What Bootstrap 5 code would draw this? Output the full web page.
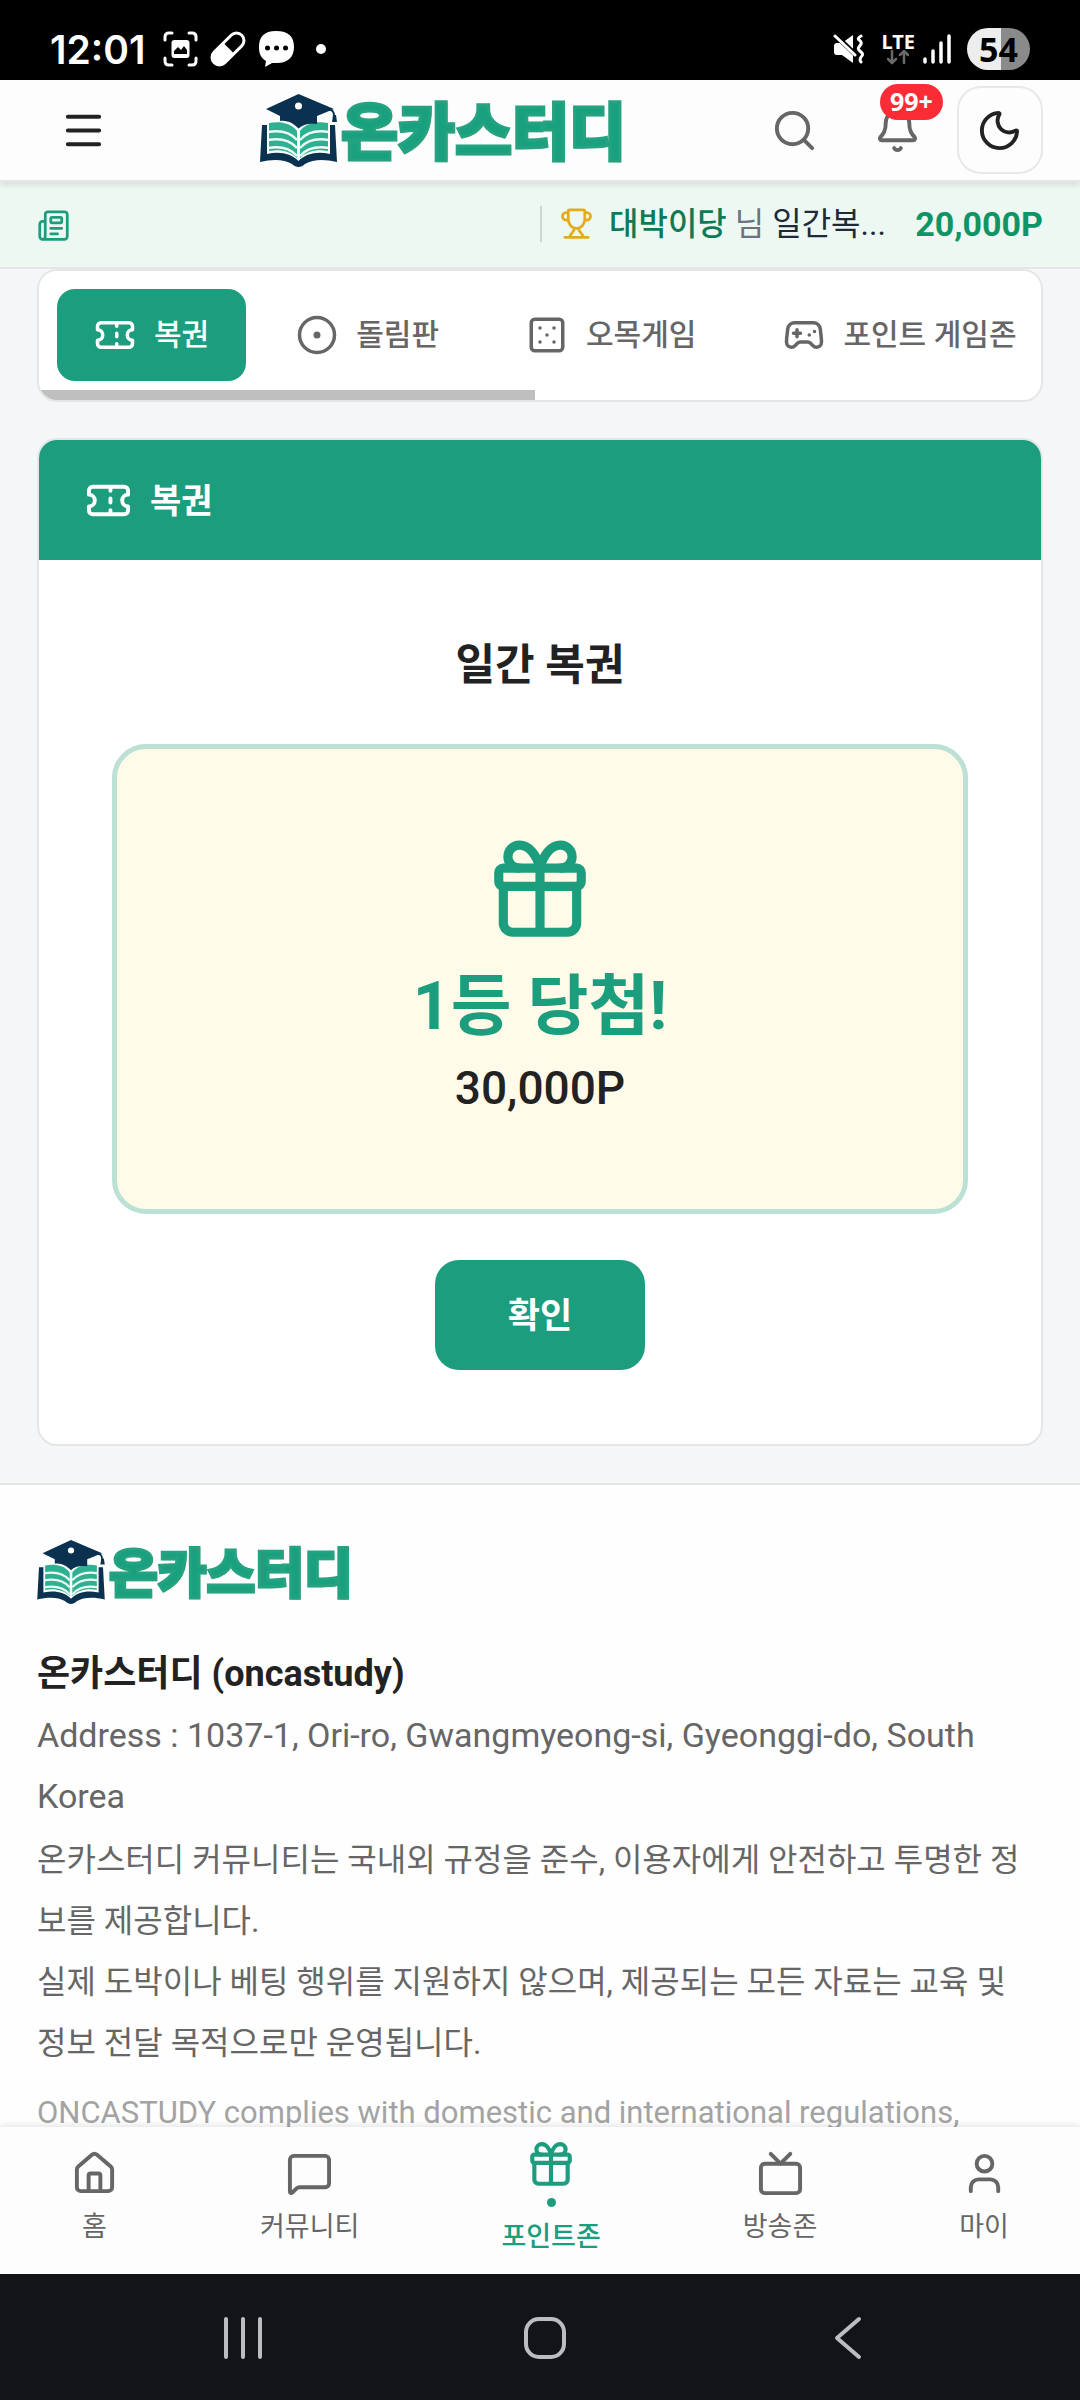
<!DOCTYPE html>
<html lang="ko">
<head>
<meta charset="utf-8">
<meta name="viewport" content="width=device-width, initial-scale=1">
<title>온카스터디 - 복권</title>
<link href="https://cdn.jsdelivr.net/npm/bootstrap@5.3.0/dist/css/bootstrap.min.css" rel="stylesheet">
<style>
  :root { --brand: #1c9e7e; --ink: #222; --soft: #666; --line: #e5e7e7; --gutter: 37px; }
  body { font-family: Roboto, "Noto Sans CJK KR", sans-serif; color: var(--ink); background: #f4f6f8; line-height: 1.2; }
  button { font-family: inherit; }
  .ico { width: 47px; height: 47px; flex: none; fill: none; stroke: currentColor; stroke-width: 2; stroke-linecap: round; stroke-linejoin: round; }
  .ico-tab { width: 42px; height: 42px; }
  .ico-tick { width: 33px; height: 33px; }
  .ico-point { width: 50px; height: 50px; }
  .ico-prize { width: 110px; height: 110px; color: var(--brand); }

  .phone-status { height: 80px; padding: 18px 50px 0; background: #000; color: #fff; }
  .phone-status .left { gap: 18px; }
  .clock { font: 600 39px/1 Inter, sans-serif; }
  .lte { font: 700 20px/16px "Noto Sans", sans-serif; }
  .battery { width: 63px; height: 42px; border-radius: 21px; background: linear-gradient(90deg, #ededed 54%, #8a8a8a 54%); color: #000; font: 700 34px/42px "Noto Sans", sans-serif; }

  .site-header { height: 102px; padding: 0 var(--gutter); background: #fdfdfd; border-bottom: 2px solid var(--line); box-shadow: 0 3px 6px rgba(0,0,0,.1); z-index: 2; }
  .tools { gap: 15px; }
  .tool-btn { width: 88px; height: 88px; padding: 0; border: 0; background: none; color: var(--soft); }
  .tool-btn.menu { width: 98px; padding-right: 6px; color: var(--ink); }
  .tool-btn.theme { width: 86px; border: 2px solid #e7e8e8; border-radius: 24px; color: var(--ink); }
  .count { top: -2px; left: 26px; height: 36px; border-radius: 18px; padding: 0 10px; background: #fb2c36; color: #fff; font: 700 25px/34px "Noto Sans", sans-serif; }
  .brand { color: #19a07e; font-family: "Noto Sans CJK KR", sans-serif; font-weight: 900; font-size: 62px; line-height: 73px; text-decoration: none; }
  .brand span { padding-bottom: 4px; -webkit-text-stroke: 3px #25a280; text-shadow: 1px 1px 1px #2b6f58; }
  .brand svg { width: 77px; height: 73px; }
  .brand-sm { font-size: 53px; line-height: 60px; }
  .brand-sm svg { width: 68px; height: 64px; }

  .ticker { height: 87px; padding: 0 var(--gutter) 2px; background: #edf8f3; border-bottom: 2px solid #e4e7e6; font-size: 32px; }
  .ticker .winner { border-left: 2px solid #cbd6d3; padding-left: 18px; height: 36px; line-height: 36px; }
  .ticker .news { color: var(--brand); }
  .ticker .cup { color: #e3ac1c; }
  .ticker .who { color: #0f7a55; font-weight: 500; }
  .ticker .nim { color: #6b7280; }
  .ticker .what { color: #1f2937; }
  .ticker .sum { color: #0f9565; font-size: 34px; }

  .page { min-height: 0; }
  .page-inner { padding: 0 var(--gutter); }
  .tabs { border: 2px solid var(--line); border-radius: 20px; background: #fff; padding: 18px 18px 19px; gap: 13px; }
  .tab-link { height: 92px; padding: 0 37px; gap: 18px; border-radius: 18px; color: var(--soft); font-size: 30px; font-weight: 500; text-decoration: none; white-space: nowrap; flex: none; }
  .tab-link.on { background: var(--brand); color: #fff; }
  .tab-scroll { left: 0; bottom: 0; width: 496px; height: 10px; background: #bfbfbf; }

  .panel { margin-top: 36px; border: 2px solid var(--line); border-radius: 20px; background: #fff; }
  .panel-head { height: 120px; padding: 0 46px; gap: 18px; background: var(--brand); color: #fff; }
  .panel-head h1 { margin: 3px 0 0; font-size: 34px; font-weight: 700; }
  .panel-body { padding: 75px 73px 74px; }
  .panel-body h2 { font-size: 43px; line-height: 60px; font-weight: 700; }
  .prize { margin-top: 49px; height: 470px; border: 5px solid #bbe1d5; border-radius: 34px; background: #fffbe8; padding-top: 87px; }
  .rank { font-size: 66px; line-height: 90px; font-weight: 700; color: var(--brand); margin-top: 16px; }
  .points { font-size: 46px; line-height: 60px; font-weight: 500; margin-top: 6px; }
  .ok-btn { margin-top: 46px; padding-top: 4px; width: 210px; height: 110px; border: 0; border-radius: 24px; background: var(--brand); color: #fff; font-size: 35px; font-weight: 700; }

  .site-footer { margin-top: 37px; padding: 55px var(--gutter) 0; border-top: 2px solid var(--line); background: #fefefe; font-size: 32px; line-height: 61px; color: var(--soft); }
  .site-footer h3 { margin: 40px 0 0; font-size: 36px; line-height: 61px; font-weight: 700; color: var(--ink); }
  .site-footer .addr { font-size: 34px; margin-bottom: 3px; }
  .site-footer .note { margin-top: 8px; font-size: 31px; color: #a3a3a3; }

  .bottom-nav { height: 147px; background: #fdfdfd; box-shadow: 0 -2px 6px rgba(0,0,0,.1); z-index: 2; }
  .bottom-nav a { color: var(--soft); font-size: 27px; line-height: 34px; text-decoration: none; padding-top: 23px; gap: 13px; }
  .bottom-nav a.on { color: var(--brand); font-weight: 500; padding-top: 13px; gap: 0; }
  .dot { width: 9px; height: 9px; border-radius: 50%; background: var(--brand); margin: 8px 0 13px; }

  .phone-keys { height: 126px; padding: 2px 81px 0 92px; background: #121418; }
  .phone-keys button { border: 0; background: none; color: #bbbdc0; padding: 0; }
  .phone-keys svg { width: 44px; height: 44px; fill: none; stroke: currentColor; stroke-width: 4; stroke-linecap: round; stroke-linejoin: round; }
</style>
<script src="https://cdn.jsdelivr.net/npm/bootstrap@5.3.0/dist/js/bootstrap.bundle.min.js"></script>
</head>
<body class="vh-100 d-flex flex-column overflow-hidden">

<svg class="d-none" aria-hidden="true">
  <symbol id="ticket" viewBox="0 0 24 24"><path d="M2 9a3 3 0 0 1 0 6v2a2 2 0 0 0 2 2h16a2 2 0 0 0 2-2v-2a3 3 0 0 1 0-6V7a2 2 0 0 0-2-2H4a2 2 0 0 0-2 2ZM13 5v2M13 17v2M13 11v2"/></symbol>
  <symbol id="gift" viewBox="0 0 24 24"><path d="M12 7v14M20 11v8a2 2 0 0 1-2 2H6a2 2 0 0 1-2-2v-8M7.5 7a1 1 0 0 1 0-5A4.8 8 0 0 1 12 7a4.8 8 0 0 1 4.5-5 1 1 0 0 1 0 5"/><rect x="3" y="7" width="18" height="4" rx="1"/></symbol>
  <symbol id="book" viewBox="0 0 77 73">
    <path d="M2 31h5v29c12-3 24-1 31.500 7C46 59 58 57 70 60V31h5l2 37c-12-3-24-3-32 2-4 4-9 4-13 0C24 65 12 65 0 68z" fill="#0b3150"/>
    <path d="M9 29c11-2 22 0 28 8v27C30 57 20 55 9 57zM68 29c-11-2-22 0-28 8v27c7-7 17-9 28-7z" fill="#2fb191"/>
    <path d="M8 38c12-2 22 0 29 8M8 46c12-2 22 0 29 8M8 54c12-2 22 0 29 8M69 38c-12-2-22 0-29 8M69 46c-12-2-22 0-29 8M69 54c-12-2-22 0-29 8" fill="none" stroke="#effaf6" stroke-width="2.500"/>
    <path d="M38.500 0 74 15 57 22v8c-8-1-14 0-18.500 4.500C34 30 28 26 20 27v-5L6 15z" fill="#0b3150"/>
    <path d="M66 16c7-1 8 2 8 6" fill="none" stroke="#0b3150" stroke-width="2"/><path d="M73 21h3l1 7h-5z" fill="#0b3150"/>
    <circle cx="38.500" cy="12" r="3.500" fill="#fff"/>
  </symbol>
</svg>

<div class="phone-status d-flex justify-content-between align-items-center flex-shrink-0">
  <div class="left d-flex align-items-center">
    <span class="clock">12:01</span>
    <svg width="163" height="36" viewBox="0 0 163 36" aria-hidden="true">
      <g fill="none" stroke="#fff" stroke-width="3" stroke-linecap="round"><path d="M2 9V6q0-4 4-4h3M26 2h3q4 0 4 4v3M33 27v3q0 4-4 4h-3M9 34H6q-4 0-4-4v-3"/></g>
      <rect x="8.500" y="9" width="18" height="18" rx="3" fill="#fff"/><path d="M11 23v-3l4-4 3 3 3-4 3 4v4z" fill="#000"/>
      <g transform="rotate(-45 65 18)"><rect x="44" y="9" width="42" height="18" rx="9" fill="#fff"/><path d="M66 12h11a6 6 0 0 1 0 12H66z" fill="#000"/></g>
      <path d="M113 0c13 0 18 6 18 16s-6 16-17 16h-5l-7 4 1-6c-5-3-7-7-7-14 0-10 5-16 17-16z" fill="#fff"/>
      <circle cx="104.500" cy="17" r="2.500"/><circle cx="113.500" cy="17" r="2.500"/><circle cx="122.500" cy="17" r="2.500"/>
      <circle cx="158" cy="18" r="5" fill="#fff"/>
    </svg>
  </div>
  <div class="d-flex align-items-center">
    <svg width="32" height="30" viewBox="0 0 32 30" aria-hidden="true">
      <path d="M1 12q0-3 3-3h5L20 1v28L9 21H4q-3 0-3-3z" fill="#fff"/><path d="M0 -1 23 21" stroke="#000" stroke-width="5"/><path d="M2 2 22 21" stroke="#fff" stroke-width="3" stroke-linecap="round"/>
      <path d="M28 2c-7 4 2 4 0 8s-5 4 0 8-4 5 0 10" fill="none" stroke="#fff" stroke-width="3" stroke-linecap="round"/>
    </svg>
    <div class="d-flex flex-column align-items-center ms-3">
      <span class="lte">LTE</span>
      <svg width="22" height="15" viewBox="0 0 22 15" fill="none" stroke="#6a6a6a" stroke-width="2.500" stroke-linecap="round" aria-hidden="true"><path d="M5 1v12M1 9l4 4 4-4M17 13V1M13 5l4-4 4 4"/></svg>
    </div>
    <svg class="ms-2 me-3" width="28" height="30" viewBox="0 0 28 30" stroke="#fff" stroke-width="3.500" stroke-linecap="round" aria-hidden="true"><path d="M2 25v3M10 17v11M18 9v19M26 2v26"/></svg>
    <span class="battery text-center">54</span>
  </div>
</div>

<header class="site-header d-flex align-items-center justify-content-between position-relative flex-shrink-0">
  <button class="tool-btn menu" type="button" aria-label="메뉴"><svg class="ico" viewBox="0 0 24 24"><path d="M4 5h16M4 12h16M4 19h16"/></svg></button>
  <a class="brand d-flex align-items-center gap-1" href="#"><svg aria-hidden="true"><use href="#book"/></svg><span>온카스터디</span></a>
  <div class="tools d-flex align-items-center">
    <button class="tool-btn" type="button" aria-label="검색"><svg class="ico" viewBox="0 0 24 24"><path d="m21 21-4.340-4.340"/><circle cx="11" cy="11" r="8"/></svg></button>
    <button class="tool-btn position-relative" type="button" aria-label="알림"><svg class="ico" viewBox="0 0 24 24"><path d="M10.268 21a2 2 0 0 0 3.464 0M3.262 15.326A1 1 0 0 0 4 17h16a1 1 0 0 0 .74-1.673C19.410 13.956 18 12.499 18 8A6 6 0 0 0 6 8c0 4.499-1.411 5.956-2.738 7.326"/></svg><span class="count position-absolute">99+</span></button>
    <button class="tool-btn theme" type="button" aria-label="다크 모드"><svg class="ico" viewBox="0 0 24 24"><path d="M20.985 12.486a9 9 0 1 1-9.473-9.472c.405-.022.617.46.402.803a6 6 0 0 0 8.268 8.268c.344-.215.825-.004.803.401"/></svg></button>
  </div>
</header>

<div class="ticker d-flex align-items-center flex-shrink-0">
  <div class="news w-50"><svg class="ico ico-tick" viewBox="0 0 24 24"><path d="M15 18h-5M18 14h-8M4 22h16a2 2 0 0 0 2-2V4a2 2 0 0 0-2-2H8a2 2 0 0 0-2 2v16a2 2 0 0 1-4 0v-9a2 2 0 0 1 2-2h2"/><rect x="10" y="6" width="8" height="4" rx="1"/></svg></div>
  <div class="winner w-50 d-flex align-items-center">
    <svg class="ico ico-tick cup" viewBox="0 0 24 24"><path d="M10.500 15.500c0 2.500-3 3.500-3.500 6.500M13.500 15.500c0 2.500 3 3.500 3.500 6.500M18 9.500h1.500a2 2 0 0 0 0-5.500H18M3.500 22h17M6 9a6 6.500 0 0 0 12 0V3a1 1 0 0 0-1-1H7a1 1 0 0 0-1 1zM6 9.500H4.500a2 2 0 0 1 0-5.500H6"/></svg>
    <span class="who ms-3">대박이당</span>
    <span class="nim ms-2">님</span>
    <span class="what ms-2">일간복...</span>
    <strong class="sum ms-auto">20,000P</strong>
  </div>
</div>

<main class="page flex-fill overflow-hidden">
  <div class="page-inner">
    <nav class="tabs d-flex overflow-hidden position-relative">
      <a class="tab-link on d-flex align-items-center" href="#"><svg class="ico ico-tab"><use href="#ticket"/></svg>복권</a>
      <a class="tab-link d-flex align-items-center" href="#"><svg class="ico ico-tab" viewBox="0 0 24 24"><circle cx="12" cy="12" r="10"/><circle cx="12" cy="12" r="1"/></svg>돌림판</a>
      <a class="tab-link d-flex align-items-center" href="#"><svg class="ico ico-tab" viewBox="0 0 24 24"><rect x="3" y="3" width="18" height="18" rx="2"/><path d="M16 8h.01M8 8h.01M8 16h.01M16 16h.01M12 12h.01"/></svg>오목게임</a>
      <a class="tab-link d-flex align-items-center" href="#"><svg class="ico ico-tab" viewBox="0 0 24 24"><path d="M6 11h4M8 9v4M15 12h.01M18 10h.01M17.320 5H6.680a4 4 0 0 0-3.978 3.590c-.006.052-.01.101-.017.152C2.604 9.416 2 14.456 2 16a3 3 0 0 0 3 3c1 0 1.500-.5 2-1l1.414-1.414A2 2 0 0 1 9.828 16h4.344a2 2 0 0 1 1.414.586L17 18c.5.5 1 1 2 1a3 3 0 0 0 3-3c0-1.545-.604-6.584-.685-7.258-.007-.05-.011-.1-.017-.151A4 4 0 0 0 17.320 5z"/></svg>포인트 게임존</a>
      <div class="tab-scroll position-absolute"></div>
    </nav>

    <section class="panel overflow-hidden">
      <div class="panel-head d-flex align-items-center"><svg class="ico"><use href="#ticket"/></svg><h1>복권</h1></div>
      <div class="panel-body text-center">
        <h2 class="mb-0">일간 복권</h2>
        <div class="prize d-flex flex-column align-items-center">
          <svg class="ico ico-prize"><use href="#gift"/></svg>
          <div class="rank">1등 당첨!</div>
          <div class="points">30,000P</div>
        </div>
        <button class="ok-btn" type="button">확인</button>
      </div>
    </section>
  </div>

  <footer class="site-footer">
    <a class="brand brand-sm d-flex align-items-center gap-1" href="#"><svg aria-hidden="true"><use href="#book"/></svg><span>온카스터디</span></a>
    <h3>온카스터디 (oncastudy)</h3>
    <p class="addr mt-0">Address : 1037-1, Ori-ro, Gwangmyeong-si, Gyeonggi-do, South Korea</p>
    <p class="m-0">온카스터디 커뮤니티는 국내외 규정을 준수, 이용자에게 안전하고 투명한 정보를 제공합니다.</p>
    <p class="m-0">실제 도박이나 베팅 행위를 지원하지 않으며, 제공되는 모든 자료는 교육 및 정보 전달 목적으로만 운영됩니다.</p>
    <p class="note mb-0">ONCASTUDY complies with domestic and international regulations,</p>
  </footer>
</main>

<nav class="bottom-nav d-flex justify-content-around position-relative flex-shrink-0">
  <a class="d-flex flex-column align-items-center" href="#"><svg class="ico" viewBox="0 0 24 24"><path d="M15 21v-8a1 1 0 0 0-1-1h-4a1 1 0 0 0-1 1v8M3 10a2 2 0 0 1 .709-1.528l7-6a2 2 0 0 1 2.582 0l7 6A2 2 0 0 1 21 10v9a2 2 0 0 1-2 2H5a2 2 0 0 1-2-2z"/></svg>홈</a>
  <a class="d-flex flex-column align-items-center" href="#"><svg class="ico" viewBox="0 0 24 24"><path d="M22 17a2 2 0 0 1-2 2H6.828a2 2 0 0 0-1.414.586l-2.202 2.202A.71.71 0 0 1 2 21.286V5a2 2 0 0 1 2-2h16a2 2 0 0 1 2 2z"/></svg>커뮤니티</a>
  <a class="on d-flex flex-column align-items-center" href="#"><svg class="ico ico-point"><use href="#gift"/></svg><span class="dot"></span>포인트존</a>
  <a class="d-flex flex-column align-items-center" href="#"><svg class="ico" viewBox="0 0 24 24"><path d="m17 2-5 5-5-5"/><rect x="2" y="7" width="20" height="15" rx="2"/></svg>방송존</a>
  <a class="d-flex flex-column align-items-center" href="#"><svg class="ico" viewBox="0 0 24 24"><path d="M19 21v-2a4 4 0 0 0-4-4H9a4 4 0 0 0-4 4v2"/><circle cx="12" cy="7" r="4"/></svg>마이</a>
</nav>

<div class="phone-keys d-flex flex-shrink-0">
  <button class="flex-fill" type="button" aria-label="최근 앱"><svg viewBox="0 0 44 44"><path d="M5 3v38M22 3v38M39 3v38"/></svg></button>
  <button class="flex-fill" type="button" aria-label="홈 화면"><svg viewBox="0 0 44 44"><rect x="3" y="3" width="38" height="38" rx="13"/></svg></button>
  <button class="flex-fill" type="button" aria-label="뒤로"><svg viewBox="0 0 44 44"><path d="M33 3 11 22l22 19"/></svg></button>
</div>
</body>
</html>
